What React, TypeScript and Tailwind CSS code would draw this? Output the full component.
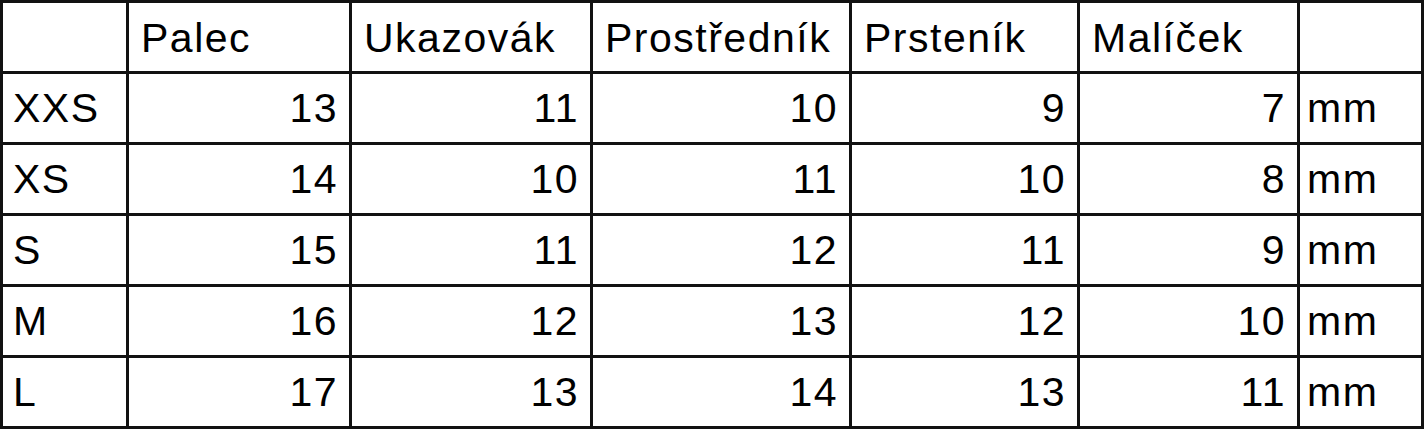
import React from 'react';

const header = ['', 'Palec', 'Ukazovák', 'Prostředník', 'Prsteník', 'Malíček', ''];

const rows: [string, number[]][] = [
    ['XXS', [13, 11, 10, 9, 7]],
    ['XS', [14, 10, 11, 10, 8]],
    ['S', [15, 11, 12, 11, 9]],
    ['M', [16, 12, 13, 12, 10]],
    ['L', [17, 13, 14, 13, 11]],
];

export default function App() {
    return (
        <div className="bg-white w-[1427px] h-[432px]" style={{ fontFamily: '"Liberation Sans", Arial, sans-serif' }}>
            <div className="grid grid-cols-[123px_220px_238px_256px_225px_217px_121px] auto-rows-[68px] gap-[3px] p-[3px] bg-[#111] w-[1424px] text-[41px] leading-none tracking-[1.5px] text-black">
                {header.map((h, i) => (
                    <div key={i} className="bg-white flex items-end pb-[12px] pl-[12px]">
                        {h}
                    </div>
                ))}
                {rows.map(([size, vals]) => (
                    <React.Fragment key={size}>
                        <div className="bg-white flex items-end pb-[13px] pl-[10px]">{size}</div>
                        {vals.map((v, i) => (
                            <div key={i} className="bg-white flex items-end justify-end pb-[13px] pr-[11px]">
                                {v}
                            </div>
                        ))}
                        <div className="bg-white flex items-end pb-[13px] pl-[7px]">mm</div>
                    </React.Fragment>
                ))}
            </div>
        </div>
    );
}
